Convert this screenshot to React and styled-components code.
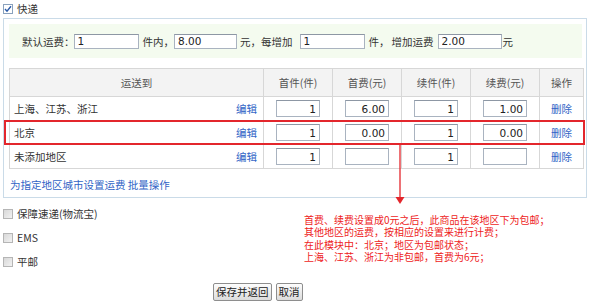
import React from "react";
import styled, { createGlobalStyle } from "styled-components";

const Global = createGlobalStyle`
  html, body { margin: 0; padding: 0; background: #fff; }
  body {
    font-family: "Noto Sans CJK SC", "DejaVu Sans", sans-serif;
    font-size: 10.5px;
    color: #333;
  }
`;

const Page = styled.div`
  position: relative;
  width: 604px;
  height: 303px;
  padding: 3px 0 0 3px;
  box-sizing: border-box;
`;

const CheckRow = styled.label`
  display: flex;
  align-items: center;
  height: ${(p) => p.$h || 12}px;
  gap: 4px;
  line-height: 12px;
  margin-top: ${(p) => p.$mt || 0}px;
`;

const Box = styled.span`
  width: 10px;
  height: 10px;
  box-sizing: border-box;
  display: inline-flex;
  align-items: center;
  justify-content: center;
  border: 1px solid ${(p) => (p.$checked ? "#8aa2bd" : "#b5b5b5")};
  background: ${(p) =>
    p.$checked ? "#fff" : "linear-gradient(135deg, #d8d8d8, #f2f2f2)"};
`;

const Checkbox = ({ checked }) => (
  <Box $checked={checked}>
    {checked && (
      <svg width="8" height="8" viewBox="0 0 8 8">
        <path d="M1 4 L3 6.2 L7 1.2" fill="none" stroke="#2a5aa8" strokeWidth="1.4" />
      </svg>
    )}
  </Box>
);

const Panel = styled.div`
  margin-top: 3px;
  width: 584px;
  box-sizing: border-box;
  border: 1px solid #cadbe8;
  padding: 5px 3px 6px 5px;
`;

const FeeBar = styled.div`
  display: flex;
  align-items: center;
  height: 34px;
  width: 573px;
  background: #f4fbef;
  padding-left: 13px;
  box-sizing: border-box;
`;

const Txt = styled.span`
  margin-left: ${(p) => p.$ml || 0}px;
  white-space: nowrap;
`;

const TopInput = styled.input`
  width: ${(p) => p.$w}px;
  height: 15px;
  box-sizing: border-box;
  margin: 0 0 0 ${(p) => p.$ml || 0}px;
  border: 1px solid #a9b3c0;
  border-top-color: #8d97a4;
  padding: 0 3px;
  font-family: "DejaVu Sans", sans-serif;
  font-size: 10.5px;
  color: #222;
  background: #fff;
  outline: none;
`;

const Table = styled.table`
  margin-top: 10px;
  width: 574px;
  border-collapse: collapse;
  table-layout: fixed;
`;

const Th = styled.th`
  height: 27px;
  background: #f3f3f3;
  border: 1px solid #d7d7d7;
  font-weight: normal;
  color: #555;
  padding: 0;
  text-align: center;
`;

const Td = styled.td`
  height: 23px;
  border: 1px solid #d7d7d7;
  padding: 0;
  text-align: ${(p) => p.$align || "center"};
  vertical-align: middle;
`;

const RegionCell = styled.div`
  display: flex;
  justify-content: space-between;
  align-items: center;
  padding: 0 6px 0 4px;
`;

const Link = styled.a`
  color: #3164c6;
  text-decoration: none;
  cursor: pointer;
`;

const CellInput = styled.input`
  width: 44px;
  height: 17px;
  box-sizing: border-box;
  border: 1px solid #a9b3c0;
  border-top-color: #8d97a4;
  padding: 0 3px;
  text-align: right;
  font-family: "DejaVu Sans", sans-serif;
  font-size: 10.5px;
  color: #222;
  vertical-align: middle;
  outline: none;
`;

const LinkLine = styled.div`
  margin-top: 10px;
  height: 12px;
  line-height: 12px;
  padding-left: 1px;
`;

const Options = styled.div`
  display: flex;
  flex-direction: column;
  gap: 12px;
  margin-top: 10px;
`;

const Buttons = styled.div`
  display: flex;
  gap: 4px;
  margin: 15px 0 0 210px;
`;

const Button = styled.button`
  height: 18px;
  padding: 0 2px;
  font-family: "Noto Sans CJK SC", sans-serif;
  font-size: 10.5px;
  line-height: 14px;
  color: #222;
  border: 1px solid #8e8e8e;
  border-radius: 2px;
  background: linear-gradient(#fdfdfd, #dcdcdc);
`;

const Highlight = styled.div`
  position: absolute;
  left: 4px;
  top: 120px;
  width: 581px;
  height: 25px;
  box-sizing: border-box;
  border: 2px solid #e3262c;
  pointer-events: none;
`;

const Arrow = styled.svg`
  position: absolute;
  left: 395px;
  top: 145px;
`;

const Note = styled.div`
  position: absolute;
  left: 304px;
  top: 214px;
  display: flex;
  flex-direction: column;
  color: #ee1c1c;
  font-size: 10px;
  white-space: nowrap;
`;

const NoteLine = styled.div`
  height: 12.4px;
  line-height: 12.4px;
  overflow: visible;
`;

const rows = [
  { name: "上海、江苏、浙江", a: "1", b: "6.00", c: "1", d: "1.00" },
  { name: "北京", a: "1", b: "0.00", c: "1", d: "0.00" },
  { name: "未添加地区", a: "1", b: "", c: "1", d: "" },
];

const notes = [
  "首费、续费设置成0元之后，此商品在该地区下为包邮；",
  "其他地区的运费，按相应的设置来进行计费；",
  "在此模块中：北京；地区为包邮状态；",
  "上海、江苏、浙江为非包邮，首费为6元；",
];

export default function App() {
  return (
    <Page>
      <Global />
      <CheckRow $h={12}>
        <Checkbox checked />
        <span>快递</span>
      </CheckRow>
      <Panel>
        <FeeBar>
          <Txt>默认运费：</Txt>
          <TopInput $w={65} $ml={-1} defaultValue="1" />
          <Txt $ml={4}>件内，</Txt>
          <TopInput $w={63} defaultValue="8.00" />
          <Txt $ml={3}>元，</Txt>
          <Txt>每增加</Txt>
          <TopInput $w={65} $ml={7} defaultValue="1" />
          <Txt $ml={4}>件，</Txt>
          <Txt $ml={2}>增加运费</Txt>
          <TopInput $w={64} $ml={4} defaultValue="2.00" />
          <Txt $ml={1}>元</Txt>
        </FeeBar>
        <Table>
          <colgroup>
            <col style={{ width: 254 }} />
            <col style={{ width: 69 }} />
            <col style={{ width: 69 }} />
            <col style={{ width: 69 }} />
            <col style={{ width: 69 }} />
            <col style={{ width: 44 }} />
          </colgroup>
          <thead>
            <tr>
              <Th>运送到</Th>
              <Th>首件(件)</Th>
              <Th>首费(元)</Th>
              <Th>续件(件)</Th>
              <Th>续费(元)</Th>
              <Th>操作</Th>
            </tr>
          </thead>
          <tbody>
            {rows.map((r) => (
              <tr key={r.name}>
                <Td $align="left">
                  <RegionCell>
                    <span>{r.name}</span>
                    <Link>编辑</Link>
                  </RegionCell>
                </Td>
                <Td>
                  <CellInput defaultValue={r.a} />
                </Td>
                <Td>
                  <CellInput defaultValue={r.b} />
                </Td>
                <Td>
                  <CellInput defaultValue={r.c} />
                </Td>
                <Td>
                  <CellInput defaultValue={r.d} />
                </Td>
                <Td>
                  <Link>删除</Link>
                </Td>
              </tr>
            ))}
          </tbody>
        </Table>
        <LinkLine>
          <Link>为指定地区城市设置运费</Link> <Link>批量操作</Link>
        </LinkLine>
      </Panel>
      <Options>
        <CheckRow>
          <Checkbox />
          <span>保障速递(物流宝)</span>
        </CheckRow>
        <CheckRow>
          <Checkbox />
          <span>EMS</span>
        </CheckRow>
        <CheckRow>
          <Checkbox />
          <span>平邮</span>
        </CheckRow>
      </Options>
      <Buttons>
        <Button>保存并返回</Button>
        <Button>取消</Button>
      </Buttons>

      <Highlight />
      <Arrow width="10" height="60" viewBox="0 0 10 60">
        <line x1="5" y1="0" x2="5" y2="52" stroke="#e3262c" strokeWidth="1.3" />
        <polygon points="0.5,52 9.5,52 5,59" fill="#e3262c" />
      </Arrow>
      <Note>
        {notes.map((n) => (
          <NoteLine key={n}>{n}</NoteLine>
        ))}
      </Note>
    </Page>
  );
}
